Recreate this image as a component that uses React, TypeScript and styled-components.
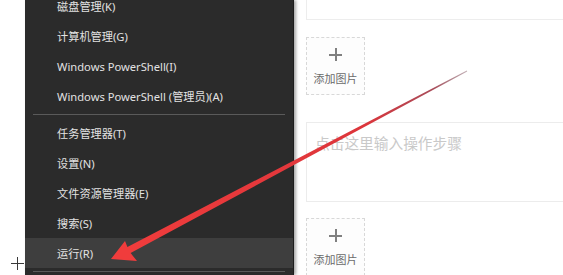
import React from "react";
import styled, { createGlobalStyle } from "styled-components";

const Global = createGlobalStyle`
  html, body { margin: 0; padding: 0; background: #ffffff; }
  body { font-family: "Noto Sans", "Noto Sans CJK SC", sans-serif; }
  * { box-sizing: border-box; }
`;

const Page = styled.div`
  position: relative;
  width: 563px;
  height: 275px;
  display: flex;
  overflow: hidden;
  background: #ffffff;
`;

const Gutter = styled.div`
  width: 25px;
  flex: none;
  display: flex;
  flex-direction: column;
  justify-content: flex-end;
  padding: 0 0 5px 11px;
`;

const Cross = styled.div`
  position: relative;
  width: 13px;
  height: 13px;
  &::before, &::after {
    content: "";
    position: absolute;
    background: #3a3a3a;
  }
  &::before { left: 0; right: 0; top: 6px; height: 1px; }
  &::after { top: 0; bottom: 0; left: 6px; width: 1px; }
`;

const Menu = styled.div`
  width: 269px;
  flex: none;
  background: #2b2b2b;
  border-right: 1px solid #1d1d1d;
  box-shadow: 2px 0 3px rgba(0, 0, 0, 0.35);
  z-index: 1;
`;

const MenuList = styled.div`
  margin-top: -9px;
  display: flex;
  flex-direction: column;
`;

const Item = styled.div<{ $active?: boolean }>`
  height: 30px;
  display: flex;
  align-items: center;
  padding-left: 32px;
  font-size: 11.2px;
  color: #e2e2e2;
  white-space: nowrap;
  background: ${(p) => (p.$active ? "#3e3e3e" : "transparent")};
`;

const Separator = styled.div`
  height: 1px;
  margin: 3px 8px;
  background: #5a5a5a;
`;

const Content = styled.div`
  flex: none;
  width: 300px;
  padding-left: 12px;
  display: flex;
  flex-direction: column;
`;

const TopCard = styled.div`
  height: 20px;
  border: 1px solid #ededed;
  border-top: none;
  flex: none;
`;

const Upload = styled.div<{ $gap: number }>`
  width: 59px;
  height: 58px;
  flex: none;
  margin-top: ${(p) => p.$gap}px;
  border: 1px dashed #d8d8d8;
  background: #fdfdfd;
  display: flex;
  flex-direction: column;
  align-items: center;
  padding-top: 10px;
`;

const Plus = styled.div`
  position: relative;
  width: 13px;
  height: 13px;
  &::before, &::after {
    content: "";
    position: absolute;
    background: #808080;
  }
  &::before { left: 0; right: 0; top: 6px; height: 1.5px; }
  &::after { top: 0; bottom: 0; left: 6px; width: 1.5px; }
`;

const UploadLabel = styled.div`
  margin-top: 11px;
  font-family: "Noto Sans CJK SC", sans-serif;
  font-size: 11px;
  line-height: 12px;
  color: #6a6a6a;
`;

const StepBox = styled.div`
  height: 80px;
  flex: none;
  margin-top: 27px;
  border: 1px solid #ececec;
  padding: 10px 8px;
  font-family: "Noto Sans CJK SC", sans-serif;
  font-size: 14.7px;
  line-height: 20px;
  color: #c9c9c9;
`;

const ArrowLayer = styled.svg`
  position: absolute;
  left: 0;
  top: 0;
  width: 563px;
  height: 275px;
  pointer-events: none;
  z-index: 2;
`;

const items: { label: string; active?: boolean; sepAfter?: boolean }[] = [
  { label: "磁盘管理(K)" },
  { label: "计算机管理(G)" },
  { label: "Windows PowerShell(I)" },
  { label: "Windows PowerShell (管理员)(A)", sepAfter: true },
  { label: "任务管理器(T)" },
  { label: "设置(N)" },
  { label: "文件资源管理器(E)" },
  { label: "搜索(S)" },
  { label: "运行(R)", active: true, sepAfter: true },
];

export default function App() {
  return (
    <>
      <Global />
      <Page>
        <Gutter>
          <Cross />
        </Gutter>
        <Menu>
          <MenuList>
            {items.map((it) => (
              <React.Fragment key={it.label}>
                <Item $active={it.active}>{it.label}</Item>
                {it.sepAfter && <Separator />}
              </React.Fragment>
            ))}
          </MenuList>
        </Menu>
        <Content>
          <TopCard />
          <Upload $gap={17}>
            <Plus />
            <UploadLabel>添加图片</UploadLabel>
          </Upload>
          <StepBox>点击这里输入操作步骤</StepBox>
          <Upload $gap={16}>
            <Plus />
            <UploadLabel>添加图片</UploadLabel>
          </Upload>
        </Content>
        <ArrowLayer viewBox="0 0 563 275">
          <defs>
            <linearGradient id="shaft" gradientUnits="userSpaceOnUse" x1="130" y1="250" x2="467" y2="71">
              <stop offset="0" stopColor="#f03c3c" />
              <stop offset="0.7" stopColor="#dc353b" />
              <stop offset="0.9" stopColor="#9a2d3c" stopOpacity="0.85" />
              <stop offset="1" stopColor="#6b3a48" stopOpacity="0.4" />
            </linearGradient>
          </defs>
          <polygon
            points="111,259 125,241 127.4,246.9 466.8,70.6 467.2,71.4 130.6,253.1 137,261"
            fill="url(#shaft)"
          />
        </ArrowLayer>
      </Page>
    </>
  );
}
